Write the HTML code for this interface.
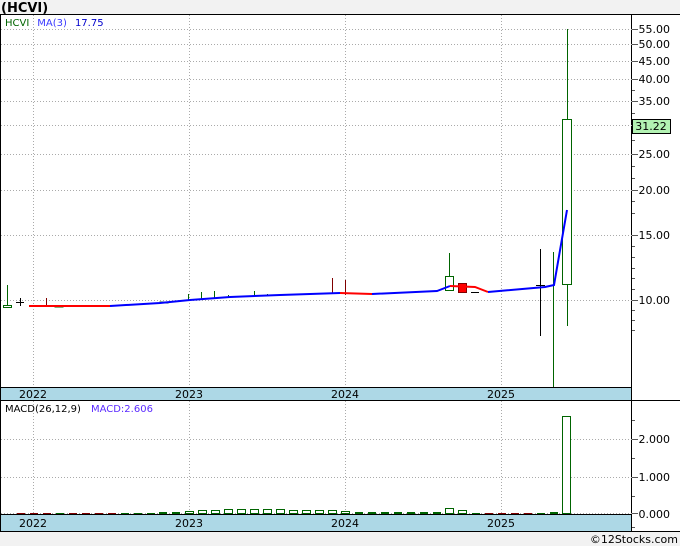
<!DOCTYPE html>
<html><head><meta charset="utf-8"><style>
body{margin:0;width:680px;height:546px;background:#f2f2f2;overflow:hidden;font-family:"Liberation Sans",sans-serif}
</style></head><body>
<svg width="680" height="546" xmlns="http://www.w3.org/2000/svg" font-family="'DejaVu Sans','Liberation Sans',sans-serif" style="display:block">
<rect x="0" y="0" width="680" height="546" fill="#f2f2f2"/>
<text x="1" y="12" font-size="13" font-weight="bold" fill="#000" font-family="'DejaVu Sans',sans-serif">(HCVI)</text>
<rect x="0" y="14" width="680" height="518" fill="#fff"/>
<line x1="0" y1="14.5" x2="680" y2="14.5" stroke="#000"/>
<line x1="0.5" y1="14" x2="0.5" y2="532" stroke="#000"/>
<line x1="631.5" y1="14" x2="631.5" y2="532" stroke="#000"/>
<line x1="0" y1="531.5" x2="680" y2="531.5" stroke="#000"/>
<g stroke="#aaa" stroke-dasharray="1,2" stroke-width="1">
<line x1="33.5" y1="15" x2="33.5" y2="387"/><line x1="189.5" y1="15" x2="189.5" y2="387"/><line x1="345.5" y1="15" x2="345.5" y2="387"/><line x1="501.5" y1="15" x2="501.5" y2="387"/>
<line x1="33.5" y1="401" x2="33.5" y2="515"/><line x1="189.5" y1="401" x2="189.5" y2="515"/><line x1="345.5" y1="401" x2="345.5" y2="515"/><line x1="501.5" y1="401" x2="501.5" y2="515"/>
<line x1="1" y1="29.5" x2="632" y2="29.5"/><line x1="1" y1="44.5" x2="632" y2="44.5"/><line x1="1" y1="61.5" x2="632" y2="61.5"/><line x1="1" y1="79.5" x2="632" y2="79.5"/><line x1="1" y1="101.5" x2="632" y2="101.5"/><line x1="1" y1="125.5" x2="632" y2="125.5"/><line x1="1" y1="154.5" x2="632" y2="154.5"/><line x1="1" y1="190.5" x2="632" y2="190.5"/><line x1="1" y1="235.5" x2="632" y2="235.5"/><line x1="1" y1="300.5" x2="632" y2="300.5"/>
<line x1="1" y1="439.5" x2="632" y2="439.5"/><line x1="1" y1="477.5" x2="632" y2="477.5"/><line x1="1" y1="513.5" x2="632" y2="513.5"/>
</g>
<g stroke="#555">
<line x1="632" y1="29.5" x2="638" y2="29.5"/><line x1="632" y1="44.5" x2="638" y2="44.5"/><line x1="632" y1="61.5" x2="638" y2="61.5"/><line x1="632" y1="79.5" x2="638" y2="79.5"/><line x1="632" y1="101.5" x2="638" y2="101.5"/><line x1="632" y1="154.5" x2="638" y2="154.5"/><line x1="632" y1="190.5" x2="638" y2="190.5"/><line x1="632" y1="235.5" x2="638" y2="235.5"/><line x1="632" y1="300.5" x2="638" y2="300.5"/>
<line x1="632" y1="90.5" x2="635" y2="90.5"/><line x1="632" y1="113.5" x2="635" y2="113.5"/><line x1="632" y1="140.5" x2="635" y2="140.5"/><line x1="632" y1="166.5" x2="635" y2="166.5"/><line x1="632" y1="178.5" x2="635" y2="178.5"/><line x1="632" y1="201.5" x2="635" y2="201.5"/><line x1="632" y1="213.5" x2="635" y2="213.5"/><line x1="632" y1="246.5" x2="635" y2="246.5"/><line x1="632" y1="257.5" x2="635" y2="257.5"/><line x1="632" y1="268.5" x2="635" y2="268.5"/><line x1="632" y1="278.5" x2="635" y2="278.5"/><line x1="632" y1="289.5" x2="635" y2="289.5"/><line x1="632" y1="310.5" x2="635" y2="310.5"/><line x1="632" y1="320.5" x2="635" y2="320.5"/><line x1="632" y1="330.5" x2="635" y2="330.5"/>
<line x1="632" y1="439.5" x2="638" y2="439.5"/><line x1="632" y1="477.5" x2="638" y2="477.5"/><line x1="632" y1="513.5" x2="638" y2="513.5"/><line x1="632" y1="420.5" x2="635" y2="420.5"/><line x1="632" y1="458.5" x2="635" y2="458.5"/><line x1="632" y1="496.5" x2="635" y2="496.5"/><line x1="632" y1="527.5" x2="635" y2="527.5"/>
</g>
<g font-size="11" fill="#000" text-anchor="end">
<text x="670" y="33">55.00</text><text x="670" y="48">50.00</text><text x="670" y="65">45.00</text><text x="670" y="83">40.00</text><text x="670" y="105">35.00</text><text x="670" y="158">25.00</text><text x="670" y="194">20.00</text><text x="670" y="239">15.00</text><text x="670" y="304">10.00</text>
<text x="670" y="443">2.000</text><text x="670" y="481">1.000</text><text x="670" y="518">0.000</text>
</g>
<rect x="632.5" y="119.5" width="38" height="14" fill="#b3f2b3" stroke="#000"/>
<text x="651" y="130" font-size="11" text-anchor="middle">31.22</text>
<rect x="1" y="387" width="630" height="14" fill="#add8e6"/>
<line x1="0" y1="387.5" x2="632" y2="387.5" stroke="#000"/><line x1="0" y1="400.5" x2="680" y2="400.5" stroke="#000"/>
<rect x="1" y="515" width="630" height="16" fill="#add8e6"/>
<line x1="0" y1="514.5" x2="632" y2="514.5" stroke="#000"/>
<g font-size="11" fill="#000" text-anchor="middle">
<text x="33" y="398">2022</text><text x="189" y="398">2023</text><text x="345" y="398">2024</text><text x="501" y="398">2025</text>
<text x="33" y="527">2022</text><text x="189" y="527">2023</text><text x="345" y="527">2024</text><text x="501" y="527">2025</text>
</g>
<text x="5" y="26" font-size="10"><tspan fill="#006400">HCVI</tspan><tspan fill="#3a3aff" dx="8">MA(3)</tspan><tspan fill="#0000cc" dx="8">17.75</tspan></text>
<text x="5" y="412" font-size="10"><tspan fill="#000">MACD(26,12,9)</tspan><tspan fill="#5a2aff" dx="10">MACD:2.606</tspan></text>
<g stroke="#006400" fill="none">
<line x1="7.5" y1="285" x2="7.5" y2="306"/><rect x="3.5" y="305.5" width="8" height="2" fill="#fff"/>
<line x1="188.5" y1="294" x2="188.5" y2="300"/><line x1="201.5" y1="292" x2="201.5" y2="299"/><line x1="214.5" y1="291" x2="214.5" y2="298"/><line x1="228.5" y1="295" x2="228.5" y2="298"/><line x1="254.5" y1="291" x2="254.5" y2="296"/><line x1="267.5" y1="294" x2="267.5" y2="296"/>
<rect x="55" y="306" width="8" height="1" fill="#006400"/><rect x="160" y="302" width="8" height="1" fill="#006400"/>
<line x1="449.5" y1="253" x2="449.5" y2="276"/><rect x="445.5" y="276.5" width="8" height="14" fill="#fff"/>
<line x1="553.5" y1="252" x2="553.5" y2="387"/>
<line x1="567.5" y1="29" x2="567.5" y2="119"/><line x1="567.5" y1="284" x2="567.5" y2="326"/>
<rect x="562.5" y="119.5" width="9" height="165" fill="#fff"/>
</g>
<g stroke="#000"><line x1="16" y1="302.5" x2="24" y2="302.5"/><line x1="20.5" y1="298" x2="20.5" y2="306"/>
<line x1="540.5" y1="249" x2="540.5" y2="336"/><line x1="536" y1="285.5" x2="545" y2="285.5"/><line x1="471" y1="292.5" x2="479" y2="292.5"/></g>
<g stroke="#800000"><line x1="46.5" y1="298" x2="46.5" y2="306"/><line x1="332.5" y1="278" x2="332.5" y2="293"/><line x1="345.5" y1="280" x2="345.5" y2="295"/></g>
<rect x="458.5" y="283.5" width="8" height="9" fill="#f00" stroke="#800000"/>
<polyline fill="none" stroke="#f00" stroke-width="2" points="29,306 110,306"/>
<polyline fill="none" stroke="#00f" stroke-width="2" points="110,306 160,303 190,300 230,297 280,295 340,293"/>
<polyline fill="none" stroke="#f00" stroke-width="2" points="340,293 372,294"/>
<polyline fill="none" stroke="#00f" stroke-width="2" points="372,294 437,291 450,286"/>
<polyline fill="none" stroke="#f00" stroke-width="2" points="450,286 475,287 488,292"/>
<polyline fill="none" stroke="#00f" stroke-width="2" points="488,292 545,287 554,285 567,210"/>
<g fill="#006400">
<rect x="17" y="513" width="8" height="1" fill="#800000"/><rect x="30" y="513" width="8" height="1" fill="#800000"/><rect x="43" y="513" width="8" height="1" fill="#800000"/><rect x="56" y="513" width="8" height="1"/><rect x="69" y="513" width="8" height="1" fill="#800000"/><rect x="82" y="513" width="8" height="1" fill="#800000"/><rect x="95" y="513" width="8" height="1" fill="#800000"/><rect x="108" y="513" width="8" height="1" fill="#800000"/><rect x="121" y="513" width="8" height="1"/><rect x="134" y="513" width="8" height="1"/>
<rect x="147" y="513" width="8" height="1"/><rect x="159" y="512" width="8" height="2"/><rect x="172" y="512" width="8" height="2"/>
<rect x="407" y="512" width="8" height="2"/><rect x="420" y="512" width="8" height="2"/><rect x="433" y="512" width="8" height="2"/><rect x="472" y="513" width="8" height="1"/>
<rect x="355" y="512" width="8" height="2"/><rect x="368" y="512" width="8" height="2"/><rect x="381" y="512" width="8" height="2"/><rect x="394" y="512" width="8" height="2"/>
<rect x="485" y="513" width="8" height="1" fill="#800000"/><rect x="498" y="513" width="8" height="1" fill="#800000"/><rect x="511" y="513" width="8" height="1" fill="#800000"/><rect x="524" y="513" width="8" height="1" fill="#800000"/><rect x="537" y="513" width="8" height="1"/><rect x="550" y="512" width="8" height="2"/>
</g>
<g fill="#fff" stroke="#006400">
<rect x="185.5" y="511.5" width="8" height="2"/><rect x="198.5" y="510.5" width="8" height="3"/><rect x="211.5" y="510.5" width="8" height="3"/><rect x="224.5" y="509.5" width="8" height="4"/><rect x="237.5" y="509.5" width="8" height="4"/><rect x="250.5" y="509.5" width="8" height="4"/><rect x="263.5" y="509.5" width="8" height="4"/><rect x="276.5" y="509.5" width="8" height="4"/><rect x="289.5" y="510.5" width="8" height="3"/><rect x="302.5" y="510.5" width="8" height="3"/><rect x="315.5" y="510.5" width="8" height="3"/><rect x="328.5" y="510.5" width="8" height="3"/><rect x="341.5" y="511.5" width="8" height="2"/>
<rect x="445.5" y="508.5" width="8" height="5"/><rect x="458.5" y="510.5" width="8" height="3"/>
<rect x="562.5" y="416.5" width="8" height="97"/>
</g>
<text x="678" y="543" font-size="11" text-anchor="end" fill="#000">©12Stocks.com</text>
</svg>
</body></html>
